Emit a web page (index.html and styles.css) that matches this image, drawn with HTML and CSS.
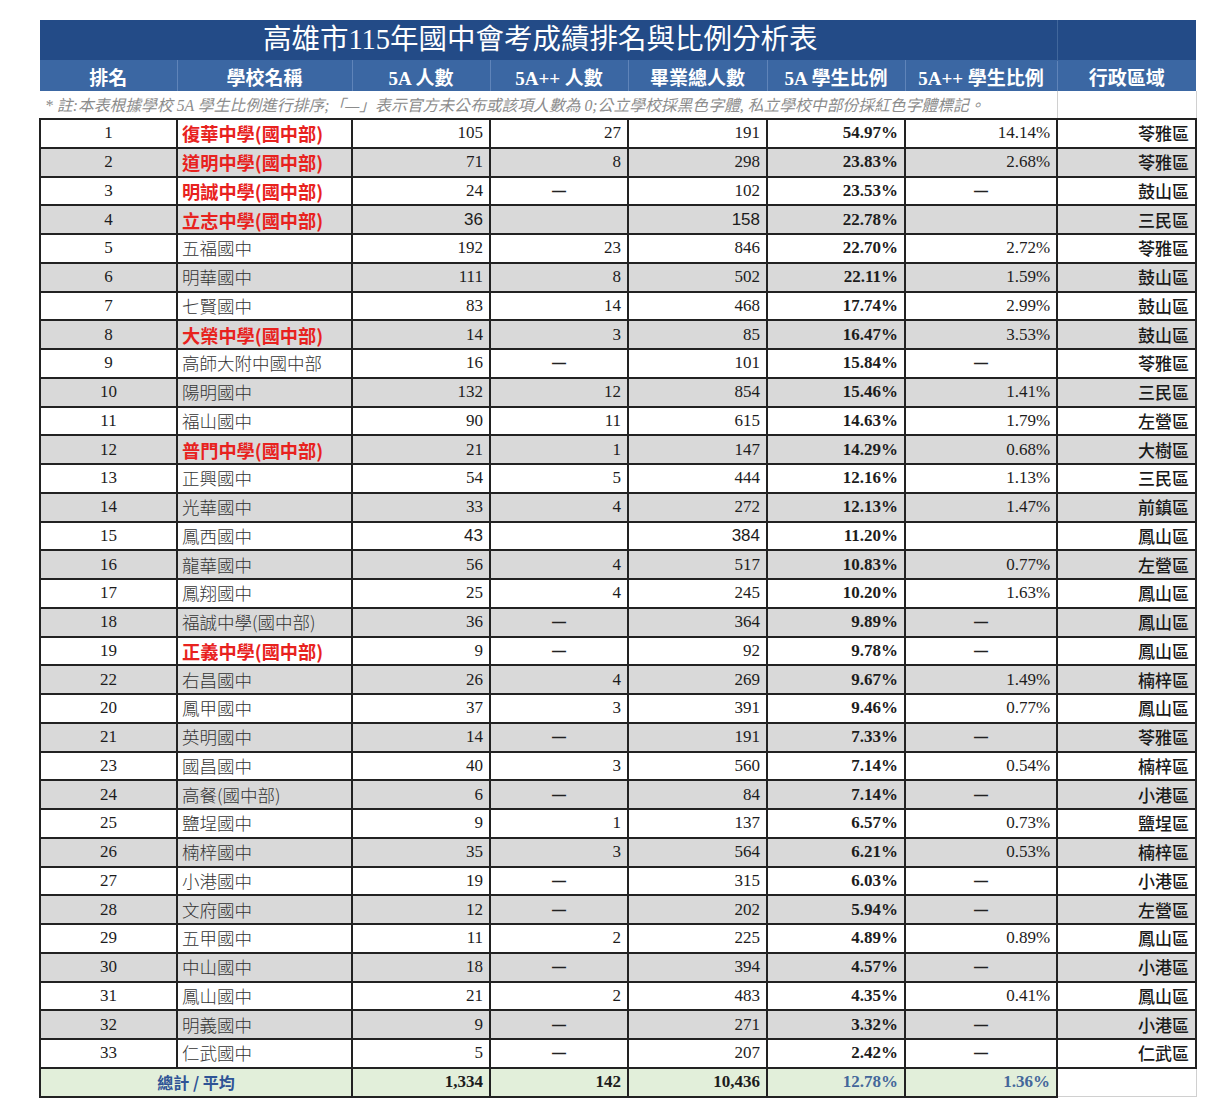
FILE: index.html
```html
<!DOCTYPE html>
<html lang="zh-Hant">
<head>
<meta charset="utf-8">
<title>高雄市115年國中會考成績排名與比例分析表</title>
<link rel="stylesheet" href="styles.css">
</head>
<body>
<div class="wrap">
<table class="grid">
<colgroup>
<col class="c-rank"><col class="c-name"><col class="c-num"><col class="c-num"><col class="c-tot"><col class="c-num"><col class="c-pp"><col class="c-dist">
</colgroup>
<thead>
<tr class="title"><td colspan="7" class="title-main">高雄市115年國中會考成績排名與比例分析表</td><td class="title-side"></td></tr>
<tr class="head"><th>排名</th><th>學校名稱</th><th>5A 人數</th><th>5A++ 人數</th><th>畢業總人數</th><th>5A 學生比例</th><th>5A++ 學生比例</th><th>行政區域</th></tr>
<tr class="note"><td colspan="7">* 註:本表根據學校 5A 學生比例進行排序;「—」表示官方未公布或該項人數為 0;公立學校採黑色字體, 私立學校中部份採紅色字體標記。</td><td class="note-side"></td></tr>
</thead>
<tbody>
<tr><td class="rank">1</td><td class="name pri">復華中學(國中部)</td><td class="num">105</td><td class="num">27</td><td class="num">191</td><td class="num b">54.97%</td><td class="num">14.14%</td><td class="dist">苓雅區</td></tr>
<tr class="alt"><td class="rank">2</td><td class="name pri">道明中學(國中部)</td><td class="num">71</td><td class="num">8</td><td class="num">298</td><td class="num b">23.83%</td><td class="num">2.68%</td><td class="dist">苓雅區</td></tr>
<tr><td class="rank">3</td><td class="name pri">明誠中學(國中部)</td><td class="num">24</td><td class="dash"><span class="dg">—</span></td><td class="num">102</td><td class="num b">23.53%</td><td class="dash"><span class="dg">—</span></td><td class="dist">鼓山區</td></tr>
<tr class="alt"><td class="rank">4</td><td class="name pri">立志中學(國中部)</td><td class="num sans">36</td><td class="num"></td><td class="num sans">158</td><td class="num b">22.78%</td><td class="num"></td><td class="dist">三民區</td></tr>
<tr><td class="rank">5</td><td class="name pub">五福國中</td><td class="num">192</td><td class="num">23</td><td class="num">846</td><td class="num b">22.70%</td><td class="num">2.72%</td><td class="dist">苓雅區</td></tr>
<tr class="alt"><td class="rank">6</td><td class="name pub">明華國中</td><td class="num">111</td><td class="num">8</td><td class="num">502</td><td class="num b">22.11%</td><td class="num">1.59%</td><td class="dist">鼓山區</td></tr>
<tr><td class="rank">7</td><td class="name pub">七賢國中</td><td class="num">83</td><td class="num">14</td><td class="num">468</td><td class="num b">17.74%</td><td class="num">2.99%</td><td class="dist">鼓山區</td></tr>
<tr class="alt"><td class="rank">8</td><td class="name pri">大榮中學(國中部)</td><td class="num">14</td><td class="num">3</td><td class="num">85</td><td class="num b">16.47%</td><td class="num">3.53%</td><td class="dist">鼓山區</td></tr>
<tr><td class="rank">9</td><td class="name pub">高師大附中國中部</td><td class="num">16</td><td class="dash"><span class="dg">—</span></td><td class="num">101</td><td class="num b">15.84%</td><td class="dash"><span class="dg">—</span></td><td class="dist">苓雅區</td></tr>
<tr class="alt"><td class="rank">10</td><td class="name pub">陽明國中</td><td class="num">132</td><td class="num">12</td><td class="num">854</td><td class="num b">15.46%</td><td class="num">1.41%</td><td class="dist">三民區</td></tr>
<tr><td class="rank">11</td><td class="name pub">福山國中</td><td class="num">90</td><td class="num">11</td><td class="num">615</td><td class="num b">14.63%</td><td class="num">1.79%</td><td class="dist">左營區</td></tr>
<tr class="alt"><td class="rank">12</td><td class="name pri">普門中學(國中部)</td><td class="num">21</td><td class="num">1</td><td class="num">147</td><td class="num b">14.29%</td><td class="num">0.68%</td><td class="dist">大樹區</td></tr>
<tr><td class="rank">13</td><td class="name pub">正興國中</td><td class="num">54</td><td class="num">5</td><td class="num">444</td><td class="num b">12.16%</td><td class="num">1.13%</td><td class="dist">三民區</td></tr>
<tr class="alt"><td class="rank">14</td><td class="name pub">光華國中</td><td class="num">33</td><td class="num">4</td><td class="num">272</td><td class="num b">12.13%</td><td class="num">1.47%</td><td class="dist">前鎮區</td></tr>
<tr><td class="rank">15</td><td class="name pub">鳳西國中</td><td class="num sans">43</td><td class="num"></td><td class="num sans">384</td><td class="num b">11.20%</td><td class="num"></td><td class="dist">鳳山區</td></tr>
<tr class="alt"><td class="rank">16</td><td class="name pub">龍華國中</td><td class="num">56</td><td class="num">4</td><td class="num">517</td><td class="num b">10.83%</td><td class="num">0.77%</td><td class="dist">左營區</td></tr>
<tr><td class="rank">17</td><td class="name pub">鳳翔國中</td><td class="num">25</td><td class="num">4</td><td class="num">245</td><td class="num b">10.20%</td><td class="num">1.63%</td><td class="dist">鳳山區</td></tr>
<tr class="alt"><td class="rank">18</td><td class="name pub">福誠中學(國中部)</td><td class="num">36</td><td class="dash"><span class="dg">—</span></td><td class="num">364</td><td class="num b">9.89%</td><td class="dash"><span class="dg">—</span></td><td class="dist">鳳山區</td></tr>
<tr><td class="rank">19</td><td class="name pri">正義中學(國中部)</td><td class="num">9</td><td class="dash"><span class="dg">—</span></td><td class="num">92</td><td class="num b">9.78%</td><td class="dash"><span class="dg">—</span></td><td class="dist">鳳山區</td></tr>
<tr class="alt"><td class="rank">22</td><td class="name pub">右昌國中</td><td class="num">26</td><td class="num">4</td><td class="num">269</td><td class="num b">9.67%</td><td class="num">1.49%</td><td class="dist">楠梓區</td></tr>
<tr><td class="rank">20</td><td class="name pub">鳳甲國中</td><td class="num">37</td><td class="num">3</td><td class="num">391</td><td class="num b">9.46%</td><td class="num">0.77%</td><td class="dist">鳳山區</td></tr>
<tr class="alt"><td class="rank">21</td><td class="name pub">英明國中</td><td class="num">14</td><td class="dash"><span class="dg">—</span></td><td class="num">191</td><td class="num b">7.33%</td><td class="dash"><span class="dg">—</span></td><td class="dist">苓雅區</td></tr>
<tr><td class="rank">23</td><td class="name pub">國昌國中</td><td class="num">40</td><td class="num">3</td><td class="num">560</td><td class="num b">7.14%</td><td class="num">0.54%</td><td class="dist">楠梓區</td></tr>
<tr class="alt"><td class="rank">24</td><td class="name pub">高餐(國中部)</td><td class="num">6</td><td class="dash"><span class="dg">—</span></td><td class="num">84</td><td class="num b">7.14%</td><td class="dash"><span class="dg">—</span></td><td class="dist">小港區</td></tr>
<tr><td class="rank">25</td><td class="name pub">鹽埕國中</td><td class="num">9</td><td class="num">1</td><td class="num">137</td><td class="num b">6.57%</td><td class="num">0.73%</td><td class="dist">鹽埕區</td></tr>
<tr class="alt"><td class="rank">26</td><td class="name pub">楠梓國中</td><td class="num">35</td><td class="num">3</td><td class="num">564</td><td class="num b">6.21%</td><td class="num">0.53%</td><td class="dist">楠梓區</td></tr>
<tr><td class="rank">27</td><td class="name pub">小港國中</td><td class="num">19</td><td class="dash"><span class="dg">—</span></td><td class="num">315</td><td class="num b">6.03%</td><td class="dash"><span class="dg">—</span></td><td class="dist">小港區</td></tr>
<tr class="alt"><td class="rank">28</td><td class="name pub">文府國中</td><td class="num">12</td><td class="dash"><span class="dg">—</span></td><td class="num">202</td><td class="num b">5.94%</td><td class="dash"><span class="dg">—</span></td><td class="dist">左營區</td></tr>
<tr><td class="rank">29</td><td class="name pub">五甲國中</td><td class="num">11</td><td class="num">2</td><td class="num">225</td><td class="num b">4.89%</td><td class="num">0.89%</td><td class="dist">鳳山區</td></tr>
<tr class="alt"><td class="rank">30</td><td class="name pub">中山國中</td><td class="num">18</td><td class="dash"><span class="dg">—</span></td><td class="num">394</td><td class="num b">4.57%</td><td class="dash"><span class="dg">—</span></td><td class="dist">小港區</td></tr>
<tr><td class="rank">31</td><td class="name pub">鳳山國中</td><td class="num">21</td><td class="num">2</td><td class="num">483</td><td class="num b">4.35%</td><td class="num">0.41%</td><td class="dist">鳳山區</td></tr>
<tr class="alt"><td class="rank">32</td><td class="name pub">明義國中</td><td class="num">9</td><td class="dash"><span class="dg">—</span></td><td class="num">271</td><td class="num b">3.32%</td><td class="dash"><span class="dg">—</span></td><td class="dist">小港區</td></tr>
<tr><td class="rank">33</td><td class="name pub">仁武國中</td><td class="num">5</td><td class="dash"><span class="dg">—</span></td><td class="num">207</td><td class="num b">2.42%</td><td class="dash"><span class="dg">—</span></td><td class="dist">仁武區</td></tr>
</tbody>
<tfoot>
<tr class="total"><td colspan="2" class="tlabel">總計 / 平均</td><td class="num b">1,334</td><td class="num b">142</td><td class="num b">10,436</td><td class="num b blue">12.78%</td><td class="num b blue">1.36%</td><td class="total-side"></td></tr>
</tfoot>
</table>
</div>
</body>
</html>
```
FILE: styles.css
```css
html, body {
  margin: 0;
  padding: 0;
  background: #ffffff;
}

.wrap {
  padding: 20px 0 0 39px;
}

.grid {
  border-collapse: collapse;
  table-layout: fixed;
  width: 1156px;
  font-family: "Liberation Serif", "Noto Sans CJK TC", serif;
  color: #1c1c1c;
}

.c-rank { width: 137px; }
.c-name { width: 175px; }
.c-num { width: 138px; }
.c-tot { width: 139px; }
.c-pp { width: 152px; }
.c-dist { width: 139px; }

/* title row */
.title td {
  height: 40px;
  padding: 0;
  background: #234b87;
  color: #ffffff;
  border: 0;
}

.title-main {
  font-size: 28.5px;
  text-align: center;
  padding-right: 16px !important;
  font-family: "Liberation Serif", "Noto Sans CJK TC", serif;
  font-weight: 400;
  line-height: 40px;
  border-right: 1px solid #41679c !important;
}

/* header row */
.head th {
  height: 30px;
  padding: 0;
  background: #3b67a3;
  color: #ffffff;
  font-size: 19px;
  font-weight: 700;
  text-align: center;
  border-left: 1px solid #5f84b9;
  border-right: 1px solid #5f84b9;
  border-top: 1px solid #3b67a3;
  font-family: "Liberation Serif", "Noto Sans CJK TC", serif;
}

.head th:first-child { border-left: 0; }
.head th:last-child { border-right: 0; }

/* note row */
.note td {
  height: 27px;
  padding: 0 0 0 5px;
  font-size: 15.8px;
  font-style: italic;
  color: #8c8c8c;
  white-space: nowrap;
  overflow: hidden;
  font-family: "Liberation Serif", "Noto Sans CJK TC", serif;
}

.note .note-side {
  border-left: 1px solid #d0d0d0;
  border-right: 1px solid #d0d0d0;
}

/* data rows */
tbody tr {
  height: 28.75px;
  background: #ffffff;
}

tbody tr.alt {
  background: #d9d9d9;
}

tbody td, .total td {
  border: 2px solid #222222;
  padding: 0 6px;
  font-size: 17px;
  line-height: 20px;
  white-space: nowrap;
}

.rank {
  text-align: center;
}

.name {
  text-align: left;
  padding-left: 4px !important;
}

.pub {
  font-family: "Noto Sans CJK TC", sans-serif;
  font-weight: 300;
  color: #333333;
  font-size: 17.5px;
}

.pri {
  font-family: "Noto Sans CJK TC", sans-serif;
  font-weight: 700;
  color: #e8221e;
  font-size: 18.2px;
}

.num {
  text-align: right;
}

.sans {
  font-family: "Liberation Sans", sans-serif;
}

.b {
  font-weight: 700;
}

.dash {
  text-align: center;
}

.dg {
  font-family: "Liberation Sans", sans-serif;
  font-weight: 700;
  font-size: 14px;
  color: #222222;
}

.dist {
  text-align: right;
  font-family: "Noto Sans CJK TC", sans-serif;
  font-weight: 500;
  color: #1a1a1a;
}

/* total row */
.total {
  height: 29px;
}

.total td {
  background: #e2efda;
}

.total .tlabel {
  text-align: center;
  font-family: "Noto Sans CJK TC", sans-serif;
  font-weight: 700;
  color: #2f5496;
  font-size: 16px;
}

.total .blue {
  color: #44679a;
}

.total .total-side {
  background: #ffffff;
  border-top: 2px solid #222222;
  border-left: 2px solid #222222;
  border-right: 1px solid #d0d0d0;
  border-bottom: 1px solid #d0d0d0;
}
```
